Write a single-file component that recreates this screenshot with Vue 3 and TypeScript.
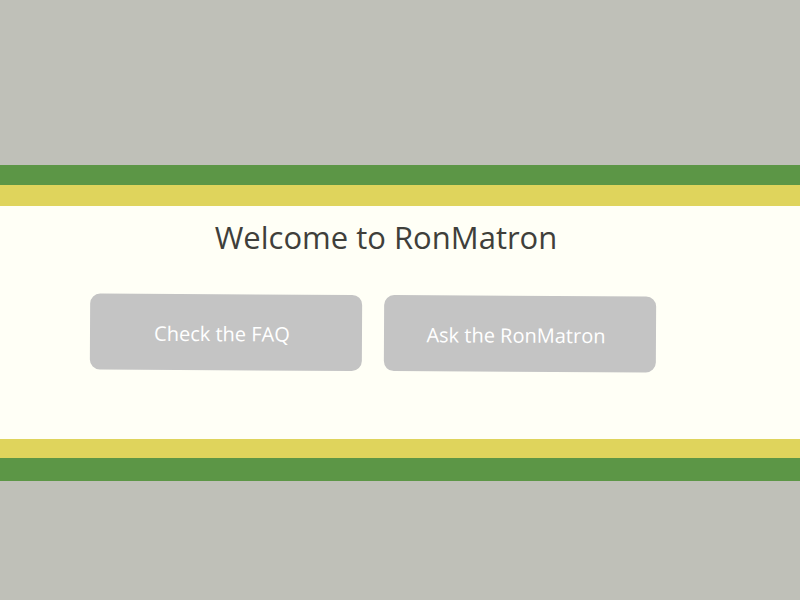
<script setup lang="ts">
interface Action {
  label: string
}

const actions: Action[] = [
  { label: 'Check the FAQ' },
  { label: 'Ask the RonMatron' },
]
</script>

<template>
  <main class="page">
    <div class="band top"></div>
    <section class="welcome">
      <h1>Welcome to RonMatron</h1>
      <nav class="actions">
        <button v-for="action in actions" :key="action.label" type="button">
          {{ action.label }}
        </button>
      </nav>
    </section>
    <div class="band bottom"></div>
  </main>
</template>

<style>
body {
  margin: 0;
  background: #bfc0b8;
}
</style>

<style scoped>
.page {
  box-sizing: border-box;
  min-height: 100vh;
  padding: 165px 0 119px;
  font-family: "Segoe UI", "Open Sans", "Noto Sans", sans-serif;
}
.band {
  border: 0 solid #5c9646;
  background: #dfd45c;
}
.top {
  height: 21px;
  border-top-width: 20px;
}
.bottom {
  height: 19px;
  border-bottom-width: 23px;
}
.welcome {
  box-sizing: border-box;
  min-height: 233px;
  padding: 9px 144px 66px 90px;
  background: #fffff6;
}
h1 {
  margin: 0 0 36px;
  padding-left: 26px;
  color: #3f3f3b;
  font-size: 31px;
  font-weight: 400;
  line-height: 44px;
  text-align: center;
}
/* The pair of buttons leans very slightly to the right. */
.actions {
  display: grid;
  grid-template-columns: 1fr 1fr;
  gap: 22px;
  transform: rotate(0.3deg);
}
button {
  height: 76px;
  padding: 4px 8px 0 0;
  border: 0;
  border-radius: 10px;
  background: #c4c4c4;
  color: #fff;
  font-family: inherit;
  font-size: 20px;
  line-height: 28px;
}
</style>
